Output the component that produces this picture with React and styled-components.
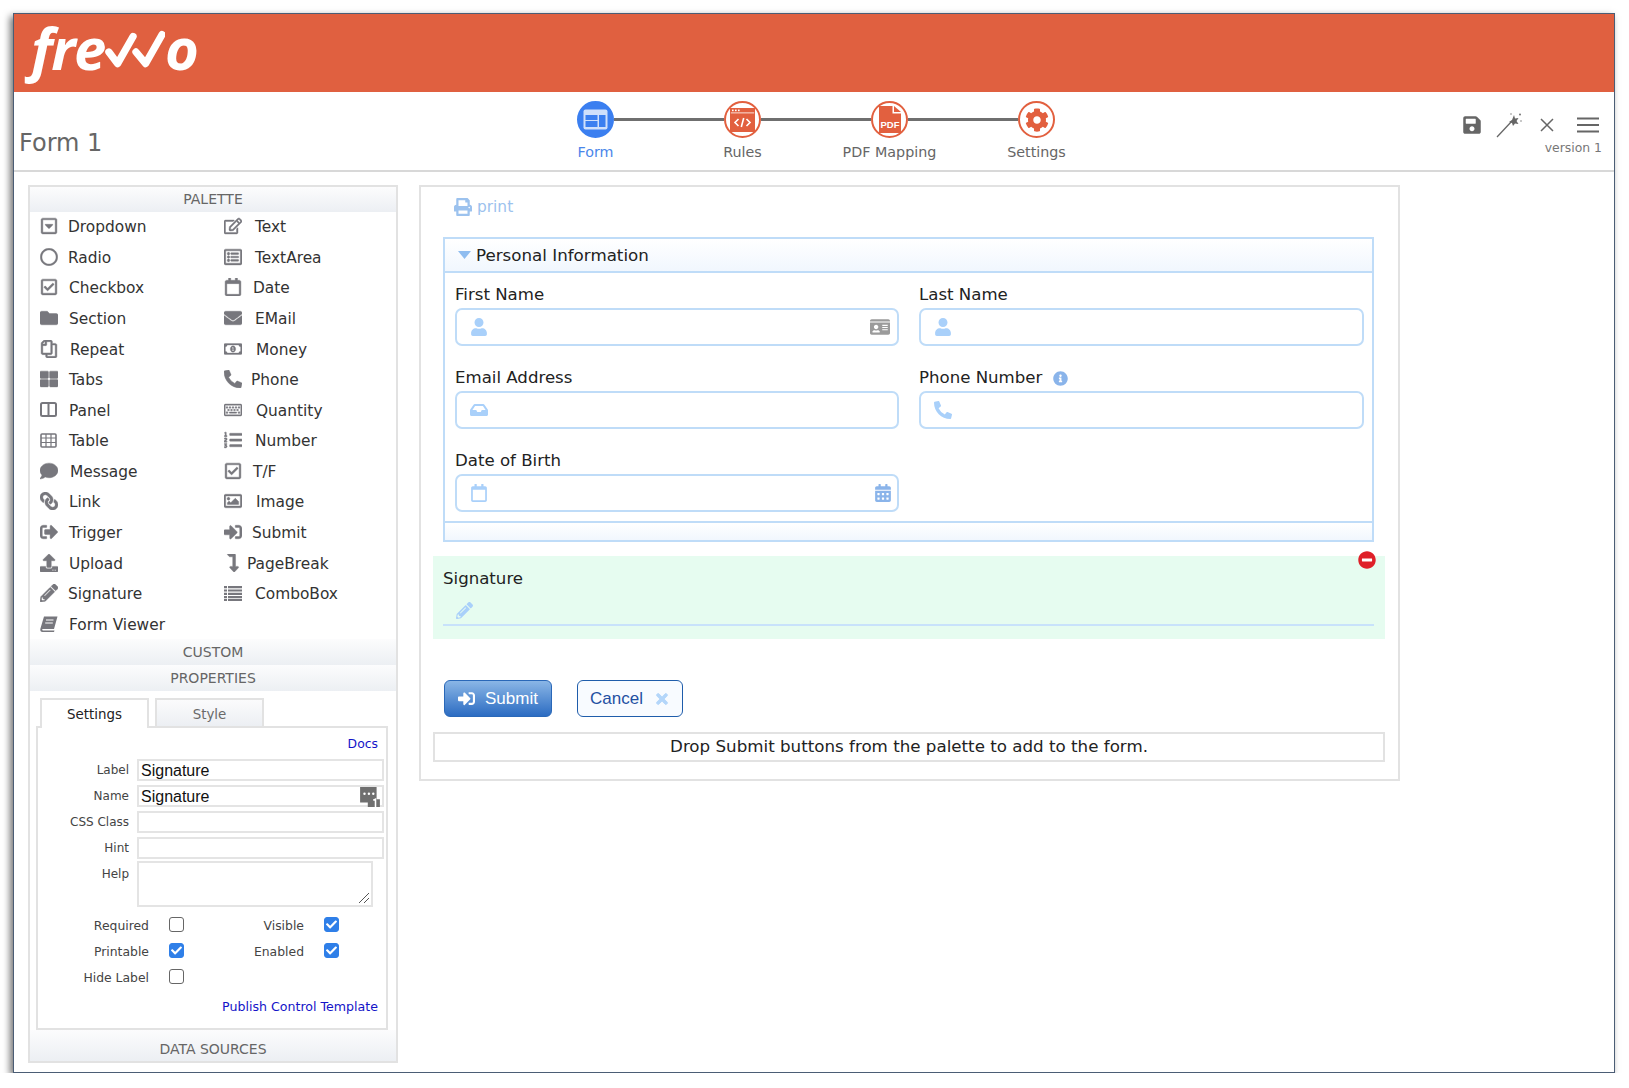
import React from "react";
import styled, { createGlobalStyle } from "styled-components";
import {
  FaRegCaretSquareDown,
  FaRegCircle,
  FaRegCheckSquare,
  FaFolder,
  FaRegCopy,
  FaThLarge,
  FaComment,
  FaLink,
  FaSignOutAlt,
  FaUpload,
  FaPencilAlt,
  FaRegEdit,
  FaRegListAlt,
  FaRegCalendar,
  FaEnvelope,
  FaRegMoneyBillAlt,
  FaPhoneAlt,
  FaRegKeyboard,
  FaListOl,
  FaRegImage,
  FaSignInAlt,
  FaLevelDownAlt,
  FaPrint,
  FaUser,
  FaIdCard,
  FaInbox,
  FaCalendarAlt,
  FaInfoCircle,
  FaMinusCircle,
  FaTimes,
  FaCog,
  FaSave,
  FaCheck,
} from "react-icons/fa";

const Global = createGlobalStyle`
  body {
    margin: 0;
    background: #fff;
    font-family: "DejaVu Sans", sans-serif;
    color: #222;
  }
`;

const Frame = styled.div`
  width: 1602px;
  height: 1060px;
  margin: 13px 0 0 13px;
  border: 1px solid #4b5d75;
  box-sizing: border-box;
  box-shadow: -3px 3px 7px rgba(0, 0, 0, 0.55);
  background: #fff;
  display: flex;
  flex-direction: column;
`;

const Header = styled.header`
  height: 78px;
  flex: none;
  background: #e06040;
  display: flex;
  align-items: flex-start;
  padding-left: 17px;
`;

const LogoText = styled.span`
  font-family: "Open Sans", sans-serif;
  font-style: italic;
  font-weight: 700;
  font-size: 58px;
  line-height: 68px;
  letter-spacing: -1.5px;
  color: #fff;
`;

const LogoChecks = styled.svg`
  width: 60px;
  height: 42px;
  margin-top: 16px;
  flex: none;
`;

const SubBar = styled.div`
  height: 80px;
  flex: none;
  box-sizing: border-box;
  border-bottom: 2px solid #d8d8d8;
  display: flex;
  align-items: flex-start;
`;

const FormTitle = styled.div`
  width: 508px;
  flex: none;
  box-sizing: border-box;
  padding: 34px 0 0 5px;
  font-size: 24px;
  line-height: 34px;
  color: #666;
`;

const Stepper = styled.div`
  display: flex;
  padding-top: 9px;
`;

const Step = styled.div`
  width: 147px;
  position: relative;
  display: flex;
  flex-direction: column;
  align-items: center;
  &:not(:last-child)::after {
    content: "";
    position: absolute;
    top: 17px;
    left: 92px;
    width: 110px;
    height: 3px;
    background: #6f6f6f;
  }
`;

const StepCircle = styled.div`
  width: 37px;
  height: 37px;
  box-sizing: border-box;
  border-radius: 50%;
  border: 2px solid ${(p) => (p.$active ? "#3b7ff0" : "#e2603f")};
  background: ${(p) => (p.$active ? "#3b7ff0" : "#fff")};
  color: #e2603f;
  display: flex;
  align-items: center;
  justify-content: center;
`;

const StepLabel = styled.div`
  margin-top: 4px;
  font-size: 14.3px;
  line-height: 20px;
  color: ${(p) => (p.$active ? "#4a86ea" : "#666")};
`;

const Tools = styled.div`
  margin-left: auto;
  padding: 17px 12px 0 0;
  display: flex;
  flex-direction: column;
  align-items: flex-end;
`;

const ToolRow = styled.div`
  display: flex;
  align-items: center;
  color: #666;
  height: 32px;
  padding-right: 3px;
`;

const ToolIcon = styled.span`
  display: flex;
  margin-right: ${(p) => p.$mr || 0}px;
`;

const VersionText = styled.div`
  font-size: 12.4px;
  line-height: 16px;
  margin-top: -1px;
  color: #777;
`;

const Workspace = styled.div`
  display: flex;
  align-items: flex-start;
  padding: 13px 0 0 14px;
  gap: 21px;
`;

const Sidebar = styled.aside`
  width: 370px;
  height: 878px;
  box-sizing: border-box;
  border: 2px solid #e2e2e2;
  display: flex;
  flex-direction: column;
`;

const PanelTitle = styled.div`
  height: ${(p) => p.$h || 25}px;
  flex: none;
  box-sizing: border-box;
  padding-top: ${(p) => p.$pad || 0}px;
  background: linear-gradient(#fcfcfd, #eceff3);
  color: #666;
  font-size: 14px;
  text-align: center;
  line-height: ${(p) => p.$lh || p.$h || 25}px;
`;

const PaletteGrid = styled.div`
  display: grid;
  grid-template-columns: 184px 1fr;
  grid-auto-rows: 30.58px;
  padding-left: 10px;
  height: 427px;
  flex: none;
`;

const PaletteItem = styled.div`
  display: flex;
  align-items: center;
  font-size: 15.4px;
  color: #333;
`;

const PaletteIcon = styled.span`
  width: ${(p) => p.$w}px;
  flex: none;
  display: flex;
  color: #77777d;
  font-size: 18px;
  margin-top: -2px;
  svg {
    stroke: currentColor;
    stroke-width: 12;
    transform: ${(p) => (p.$flip ? "scaleX(-1)" : "none")};
  }
`;

const TabStrip = styled.div`
  display: flex;
  gap: 6px;
  margin: 7px 0 0 10px;
  position: relative;
  z-index: 1;
`;

const Tab = styled.div`
  width: 109px;
  height: 30px;
  box-sizing: border-box;
  border: 2px solid #e2e2e2;
  border-bottom: ${(p) => (p.$active ? "none" : "2px solid #e2e2e2")};
  background: ${(p) => (p.$active ? "#fff" : "linear-gradient(#fbfbfc, #eceff3)")};
  color: ${(p) => (p.$active ? "#222" : "#6a6a6a")};
  font-size: 13.4px;
  line-height: 30px;
  text-align: center;
`;

const TabBody = styled.div`
  width: 352px;
  height: 304px;
  box-sizing: border-box;
  margin: -2px 0 0 6px;
  border: 2px solid #e2e2e2;
`;

const LinkRow = styled.div`
  text-align: right;
  padding-right: 8px;
  font-size: ${(p) => p.$size || 12.4}px;
  color: #1414c8;
  line-height: ${(p) => p.$h}px;
  margin-top: ${(p) => p.$top || 0}px;
`;

const PropRow = styled.div`
  display: flex;
  align-items: flex-start;
  margin-bottom: ${(p) => (p.$tight ? 2 : 4)}px;
`;

const PropLabel = styled.div`
  width: 91px;
  margin: ${(p) => p.$down || 0}px 8px 0 0;
  flex: none;
  text-align: right;
  font-size: 12px;
  line-height: 22px;
  color: #444;
`;

const PropInput = styled.div`
  width: ${(p) => p.$w || 247}px;
  height: ${(p) => p.$h || 22}px;
  box-sizing: border-box;
  border: 2px solid #e4e4e4;
  position: relative;
  font-family: "Liberation Sans", sans-serif;
  font-size: 16px;
  line-height: 20px;
  padding-left: 2px;
  color: #111;
`;

const TagBadge = styled.svg`
  position: absolute;
  right: 1px;
  top: -1px;
  width: 22px;
  height: 22px;
`;

const ResizeGrip = styled.svg`
  position: absolute;
  right: 1px;
  bottom: 1px;
  width: 12px;
  height: 12px;
`;

const ChecksGrid = styled.div`
  display: grid;
  grid-template-columns: 111px 15px 100px 15px;
  grid-auto-rows: 26px;
  column-gap: 20px;
  margin-top: 5px;
  align-items: center;
`;

const CheckLabel = styled.div`
  text-align: right;
  font-size: 12.4px;
  color: #444;
`;

const CheckBox = styled.span`
  width: 15px;
  height: 15px;
  box-sizing: border-box;
  border-radius: 3px;
  border: 1px solid ${(p) => (p.$on ? "#2f7fe8" : "#666")};
  background: ${(p) => (p.$on ? "#2f7fe8" : "#fff")};
  color: #fff;
  font-size: 11px;
  display: flex;
  align-items: center;
  justify-content: center;
  margin-top: -2px;
`;

const FormPanel = styled.main`
  width: 981px;
  height: 596px;
  box-sizing: border-box;
  border: 2px solid #e2e2e2;
  display: flex;
  flex-direction: column;
`;

const PrintRow = styled.div`
  height: 50px;
  flex: none;
  box-sizing: border-box;
  padding: 10px 0 0 33px;
  display: flex;
  align-items: flex-start;
  gap: 5px;
  color: #9cc2ee;
  font-size: 15.4px;
  line-height: 20px;
  svg {
    margin-top: 1px;
    font-size: 18px;
  }
`;

const Section = styled.section`
  width: 931px;
  margin-left: 22px;
  box-sizing: border-box;
  border: 2px solid #bfdcf8;
  flex: none;
`;

const SectionHead = styled.div`
  height: 34px;
  box-sizing: border-box;
  border-bottom: 2px solid #bfdcf8;
  background: linear-gradient(#fff, #f1f7fe);
  display: flex;
  align-items: center;
  padding-left: 13px;
  gap: 5px;
  font-size: 16.7px;
  color: #222;
`;

const Caret = styled.svg`
  width: 13px;
  height: 8px;
  flex: none;
`;

const FieldsGrid = styled.div`
  height: 248px;
  box-sizing: border-box;
  padding: 11px 0 0 10px;
  display: grid;
  grid-template-columns: 444px 445px;
  grid-auto-rows: 63px;
  column-gap: 20px;
  row-gap: 20px;
`;

const FieldLabel = styled.div`
  height: 22px;
  margin-bottom: 2px;
  font-size: 16.6px;
  line-height: 22px;
  color: #222;
  display: flex;
  align-items: center;
  gap: 11px;
`;

const FieldInput = styled.div`
  height: 38px;
  box-sizing: border-box;
  border: 2px solid #bfdcf8;
  border-radius: 7px;
  display: flex;
  align-items: center;
  justify-content: space-between;
  padding: 0 7px 0 13px;
  color: #a9d0fa;
  font-size: 18px;
`;

const CalendarEnd = styled(FaCalendarAlt)`
  color: #8ab4ea;
  margin-right: -2px;
`;

const SectionFoot = styled.div`
  height: 17px;
  border-top: 2px solid #bfdcf8;
  background: linear-gradient(#fff, #f1f7fe);
`;

const SignatureRow = styled.div`
  width: 952px;
  height: 83px;
  box-sizing: border-box;
  margin: 14px 0 0 12px;
  padding: 12px 11px 0 10px;
  background: #e6fcf0;
  position: relative;
  flex: none;
`;

const RemoveBadge = styled.span`
  position: absolute;
  right: 9px;
  top: -5px;
  display: flex;
  color: #df2029;
  font-size: 18px;
  background: radial-gradient(#fff 45%, transparent 46%);
  border-radius: 50%;
`;

const SignatureLine = styled.div`
  height: 34px;
  box-sizing: border-box;
  border-bottom: 2px solid #c8e2fb;
  padding: 10px 0 0 13px;
  color: #a9d0fa;
  font-size: 17px;
`;

const ButtonRow = styled.div`
  display: flex;
  gap: 25px;
  margin: 41px 0 0 23px;
  flex: none;
`;

const SubmitButton = styled.div`
  width: 108px;
  height: 37px;
  box-sizing: border-box;
  border: 1px solid #2a68b8;
  border-radius: 6px;
  background: linear-gradient(#8ab6e6, #2c6cc2);
  color: #fff;
  font-family: "Liberation Sans", sans-serif;
  font-size: 17px;
  display: flex;
  align-items: center;
  justify-content: center;
  gap: 10px;
  svg {
    font-size: 17px;
  }
`;

const CancelButton = styled.div`
  width: 106px;
  height: 37px;
  box-sizing: border-box;
  border: 1px solid #1f5dab;
  border-radius: 6px;
  background: #f8fbff;
  color: #1f50a2;
  font-family: "Liberation Sans", sans-serif;
  font-size: 17px;
  display: flex;
  align-items: center;
  justify-content: center;
  gap: 11px;
  svg {
    color: #b4d6fa;
    font-size: 16px;
    stroke: currentColor;
    stroke-width: 30;
  }
`;

const DropHint = styled.div`
  width: 952px;
  height: 30px;
  box-sizing: border-box;
  margin: 15px 0 0 12px;
  border: 2px solid #e2e2e2;
  text-align: center;
  font-size: 16.7px;
  line-height: 25px;
  color: #222;
  flex: none;
`;

// FontAwesome 4 shapes that the packaged set draws differently
const PanelIcon = () => (
  <svg width="17" height="15" viewBox="0 0 17 15" style={{ strokeWidth: 0 }}>
    <rect x="1" y="1" width="15" height="13" rx="1.5" fill="none" stroke="#77777d" strokeWidth="2" />
    <rect x="7.5" y="1" width="2" height="13" fill="#77777d" stroke="none" />
  </svg>
);

const TableIcon = () => (
  <svg width="17" height="15" viewBox="0 0 17 15" style={{ strokeWidth: 0 }}>
    <rect x="1" y="1" width="15" height="13" rx="1" fill="none" stroke="#77777d" strokeWidth="1.6" />
    <path d="M1 5 H16 M1 9.5 H16 M6 1 V14 M11 1 V14" stroke="#77777d" strokeWidth="1.2" fill="none" />
  </svg>
);

const BookIcon = () => (
  <svg width="18" height="16" viewBox="0 0 18 16" style={{ strokeWidth: 0 }}>
    <path d="M4 0.5 H17.5 L14 13 H2.8 Q2 13 2.2 13.8 Q2.4 14.4 3 14.4 H14.5 L14 16 H2.5 Q0 16 0.3 13 Z" fill="#77777d" stroke="none" />
    <path d="M6 4 H13.5 M5.2 7 H12.8" stroke="#fff" strokeWidth="1" />
  </svg>
);

const ComboIcon = () => (
  <svg width="18" height="15" viewBox="0 0 18 15" style={{ strokeWidth: 0 }}>
    <path
      d="M0 1.2 H3 M4 1.2 H18 M0 4.5 H3 M4 4.5 H18 M0 7.8 H3 M4 7.8 H18 M0 11.1 H3 M4 11.1 H18 M0 14 H3 M4 14 H18"
      stroke="#77777d"
      strokeWidth="2.2"
    />
  </svg>
);

const leftItems = [
  [FaRegCaretSquareDown, "Dropdown", 28],
  [FaRegCircle, "Radio", 28],
  [FaRegCheckSquare, "Checkbox", 29],
  [FaFolder, "Section", 29],
  [FaRegCopy, "Repeat", 30, true],
  [FaThLarge, "Tabs", 29],
  [PanelIcon, "Panel", 29],
  [TableIcon, "Table", 29],
  [FaComment, "Message", 30],
  [FaLink, "Link", 29, true],
  [FaSignOutAlt, "Trigger", 29],
  [FaUpload, "Upload", 29],
  [FaPencilAlt, "Signature", 28],
  [BookIcon, "Form Viewer", 29],
];

const rightItems = [
  [FaRegEdit, "Text", 31],
  [FaRegListAlt, "TextArea", 31],
  [FaRegCalendar, "Date", 29],
  [FaEnvelope, "EMail", 31],
  [FaRegMoneyBillAlt, "Money", 32],
  [FaPhoneAlt, "Phone", 27],
  [FaRegKeyboard, "Quantity", 32],
  [FaListOl, "Number", 31],
  [FaRegCheckSquare, "T/F", 29],
  [FaRegImage, "Image", 32],
  [FaSignInAlt, "Submit", 28],
  [FaLevelDownAlt, "PageBreak", 23],
  [ComboIcon, "ComboBox", 31],
];

const PaletteEntry = ({ item }) => {
  const [Icon, label, w, flip] = item;
  return (
    <PaletteItem>
      <PaletteIcon $w={w} $flip={flip}>
        <Icon />
      </PaletteIcon>
      {label}
    </PaletteItem>
  );
};

const Logo = () => (
  <>
    <LogoText>fre</LogoText>
    <LogoChecks viewBox="0 0 62 42">
      <path
        d="M4 22 L13 34 L29 6 M32 22 L42 34 L59 4"
        fill="none"
        stroke="#fff"
        strokeWidth="7.5"
        strokeLinecap="round"
        strokeLinejoin="round"
      />
    </LogoChecks>
    <LogoText>o</LogoText>
  </>
);

const FormGlyph = () => (
  <svg width="25" height="21" viewBox="0 0 25 21">
    <rect x="0.5" y="0.5" width="24" height="20" rx="2" fill="#cfe0fb" />
    <rect x="2.5" y="6" width="12" height="5" fill="#3b7ff0" />
    <rect x="2.5" y="12" width="12" height="6" fill="#3b7ff0" />
    <rect x="16" y="6" width="6.5" height="12" fill="#3b7ff0" />
  </svg>
);

const RulesGlyph = () => (
  <svg width="25" height="24" viewBox="0 0 25 24">
    <rect x="0" y="0" width="25" height="24" fill="#e2603f" />
    <rect x="0.8" y="4.5" width="23.4" height="0.8" fill="#fff" />
    <rect x="2" y="1.6" width="1.6" height="1.6" fill="#fff" />
    <rect x="5" y="1.6" width="1.6" height="1.6" fill="#fff" />
    <rect x="8" y="1.6" width="1.6" height="1.6" fill="#fff" />
    <path
      d="M8.5 11 L5 14.5 L8.5 18 M16.5 11 L20 14.5 L16.5 18 M13.7 10 L11.3 19"
      fill="none"
      stroke="#fff"
      strokeWidth="1.6"
    />
  </svg>
);

const PdfGlyph = () => (
  <svg width="22" height="27" viewBox="0 0 22 27">
    <path d="M0 0 H13.5 V7.5 H22 V27 H0 Z" fill="#e2603f" />
    <path d="M15 0 L22 6 H15 Z" fill="#e2603f" />
    <text
      x="11"
      y="21.5"
      fontFamily="Liberation Sans, sans-serif"
      fontWeight="700"
      fontSize="9.5"
      textAnchor="middle"
      fill="#fff"
    >
      PDF
    </text>
  </svg>
);

const WandIcon = () => (
  <svg width="26" height="26" viewBox="0 0 26 26">
    <path d="M1 25 L16 9" stroke="#666" strokeWidth="1.2" />
    <path
      d="M18 3 L19 6.5 L22.5 6 L20.5 9 L22.5 12 L19 11.5 L17 14 L16 11 L13 10 L16 8 Z"
      fill="#666"
    />
    <circle cx="24" cy="2.5" r="0.9" fill="#666" />
    <circle cx="15" cy="2" r="0.7" fill="#666" />
    <circle cx="25" cy="9" r="0.7" fill="#666" />
  </svg>
);

const CloseIcon = () => (
  <svg width="16" height="16" viewBox="0 0 16 16">
    <path d="M2 2 L14 14 M14 2 L2 14" stroke="#666" strokeWidth="1.5" />
  </svg>
);

const MenuIcon = () => (
  <svg width="22" height="16" viewBox="0 0 22 16">
    <path d="M0 1.5 H22 M0 8 H22 M0 14.5 H22" stroke="#666" strokeWidth="2.2" />
  </svg>
);

export default function App() {
  return (
    <>
      <Global />
      <Frame>
        <Header>
          <Logo />
        </Header>
        <SubBar>
          <FormTitle>Form 1</FormTitle>
          <Stepper>
            <Step>
              <StepCircle $active>
                <FormGlyph />
              </StepCircle>
              <StepLabel $active>Form</StepLabel>
            </Step>
            <Step>
              <StepCircle>
                <RulesGlyph />
              </StepCircle>
              <StepLabel>Rules</StepLabel>
            </Step>
            <Step>
              <StepCircle>
                <PdfGlyph />
              </StepCircle>
              <StepLabel>PDF Mapping</StepLabel>
            </Step>
            <Step>
              <StepCircle>
                <FaCog size={24} />
              </StepCircle>
              <StepLabel>Settings</StepLabel>
            </Step>
          </Stepper>
          <Tools>
            <ToolRow>
              <ToolIcon $mr={14}>
                <FaSave size={20} />
              </ToolIcon>
              <ToolIcon $mr={17}>
                <WandIcon />
              </ToolIcon>
              <ToolIcon $mr={22}>
                <CloseIcon />
              </ToolIcon>
              <ToolIcon>
                <MenuIcon />
              </ToolIcon>
            </ToolRow>
            <VersionText>version 1</VersionText>
          </Tools>
        </SubBar>
        <Workspace>
          <Sidebar>
            <PanelTitle>PALETTE</PanelTitle>
            <PaletteGrid>
              {leftItems.map((l, i) => (
                <React.Fragment key={l[1]}>
                  <PaletteEntry item={l} />
                  {rightItems[i] ? <PaletteEntry item={rightItems[i]} /> : <span />}
                </React.Fragment>
              ))}
            </PaletteGrid>
            <PanelTitle $h={26}>CUSTOM</PanelTitle>
            <PanelTitle $h={26}>PROPERTIES</PanelTitle>
            <TabStrip>
              <Tab $active>Settings</Tab>
              <Tab>Style</Tab>
            </TabStrip>
            <TabBody>
              <LinkRow $h={31}>Docs</LinkRow>
              <PropRow>
                <PropLabel>Label</PropLabel>
                <PropInput>Signature</PropInput>
              </PropRow>
              <PropRow>
                <PropLabel>Name</PropLabel>
                <PropInput>
                  Signature
                  <TagBadge viewBox="0 0 20 20">
                    <path d="M1 1 H16 V12 H19 V19 H8 V15 H1 Z" fill="#6f6f6f" />
                    <circle cx="5" cy="7" r="1.1" fill="#fff" />
                    <circle cx="9" cy="7" r="1.1" fill="#fff" />
                    <circle cx="13" cy="7" r="1.1" fill="#fff" />
                    <path d="M13 13 L15 12 V19" stroke="#fff" strokeWidth="1.4" fill="none" />
                  </TagBadge>
                </PropInput>
              </PropRow>
              <PropRow>
                <PropLabel>CSS Class</PropLabel>
                <PropInput />
              </PropRow>
              <PropRow $tight>
                <PropLabel>Hint</PropLabel>
                <PropInput />
              </PropRow>
              <PropRow>
                <PropLabel $down={2}>Help</PropLabel>
                <PropInput $w={236} $h={46}>
                  <ResizeGrip viewBox="0 0 12 12">
                    <path d="M1 11 L11 1 M6 11 L11 6" stroke="#555" strokeWidth="1" />
                  </ResizeGrip>
                </PropInput>
              </PropRow>
              <ChecksGrid>
                <CheckLabel>Required</CheckLabel>
                <CheckBox />
                <CheckLabel>Visible</CheckLabel>
                <CheckBox $on>
                  <FaCheck />
                </CheckBox>
                <CheckLabel>Printable</CheckLabel>
                <CheckBox $on>
                  <FaCheck />
                </CheckBox>
                <CheckLabel>Enabled</CheckLabel>
                <CheckBox $on>
                  <FaCheck />
                </CheckBox>
                <CheckLabel>Hide Label</CheckLabel>
                <CheckBox />
              </ChecksGrid>
              <LinkRow $h={20} $top={7} $size={12.6}>
                Publish Control Template
              </LinkRow>
            </TabBody>
            <PanelTitle $h={31} $pad={7} $lh={24}>
              DATA SOURCES
            </PanelTitle>
          </Sidebar>
          <FormPanel>
            <PrintRow>
              <FaPrint />
              print
            </PrintRow>
            <Section>
              <SectionHead>
                <Caret viewBox="0 0 13 8">
                  <path d="M0 0 H13 L6.5 8 Z" fill="#8fbdf0" />
                </Caret>
                Personal Information
              </SectionHead>
              <FieldsGrid>
                <div>
                  <FieldLabel>First Name</FieldLabel>
                  <FieldInput>
                    <FaUser />
                    <FaIdCard color="#9b9b9b" size={20} />
                  </FieldInput>
                </div>
                <div>
                  <FieldLabel>Last Name</FieldLabel>
                  <FieldInput>
                    <FaUser />
                  </FieldInput>
                </div>
                <div>
                  <FieldLabel>Email Address</FieldLabel>
                  <FieldInput>
                    <FaInbox />
                  </FieldInput>
                </div>
                <div>
                  <FieldLabel>
                    Phone Number
                    <FaInfoCircle color="#8ab4ea" size={15} />
                  </FieldLabel>
                  <FieldInput>
                    <FaPhoneAlt />
                  </FieldInput>
                </div>
                <div>
                  <FieldLabel>Date of Birth</FieldLabel>
                  <FieldInput>
                    <FaRegCalendar />
                    <CalendarEnd />
                  </FieldInput>
                </div>
              </FieldsGrid>
              <SectionFoot />
            </Section>
            <SignatureRow>
              <RemoveBadge>
                <FaMinusCircle />
              </RemoveBadge>
              <FieldLabel>Signature</FieldLabel>
              <SignatureLine>
                <FaPencilAlt />
              </SignatureLine>
            </SignatureRow>
            <ButtonRow>
              <SubmitButton>
                <FaSignInAlt />
                Submit
              </SubmitButton>
              <CancelButton>
                Cancel
                <FaTimes />
              </CancelButton>
            </ButtonRow>
            <DropHint>Drop Submit buttons from the palette to add to the form.</DropHint>
          </FormPanel>
        </Workspace>
      </Frame>
    </>
  );
}
